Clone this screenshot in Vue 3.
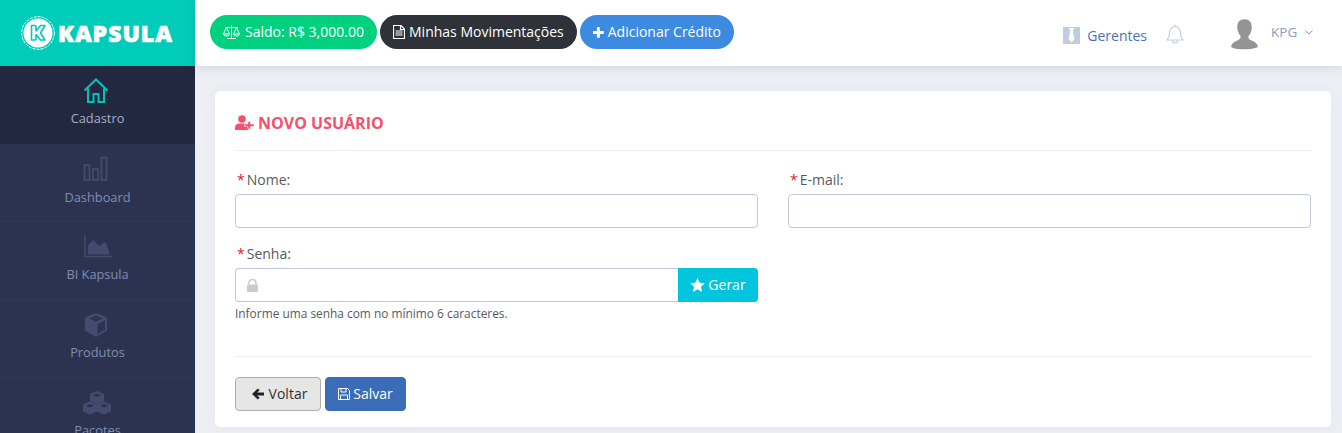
<script setup>
const menu = [
  { label: 'Dashboard', icon: 'bars' },
  { label: 'BI Kapsula', icon: 'area' },
  { label: 'Produtos', icon: 'box' },
  { label: 'Pacotes', icon: 'boxes' }
]
</script>

<template>
  <div class="page">
    <aside class="side">
      <div class="logo">
        <svg class="logo-mark" width="34" height="34" viewBox="0 0 34 34">
          <circle cx="17" cy="17" r="16.300" fill="none" stroke="#fff" stroke-width="1" stroke-dasharray="3 1" />
          <circle cx="17" cy="17" r="14.500" fill="#fff" />
          <path d="M10.500 9.500h3.500a1 1 0 0 1 1 1v4.500l4.500-5.500h4.500l-4.500 7.500 4.500 7h-4.500l-4.500-5.500v4.500a1 1 0 0 1-1 1h-3.500z" fill="none" stroke="#00ccbb" stroke-width="1.600" stroke-linejoin="round" />
        </svg>
        <span class="logo-text">KAPSULA</span>
      </div>
      <a class="item active">
        <svg width="26" height="26" viewBox="0 0 26 26" fill="none" stroke="#00c4b8" stroke-width="2">
          <path d="M1.500 12.500 13 1.500l11.500 11M5 10.500V24h5.500v-8h5v8H21V10.500" />
        </svg>
        <span>Cadastro</span>
      </a>
      <a v-for="m in menu" :key="m.label" class="item" :class="'is-' + m.icon">
        <svg v-if="m.icon === 'bars'" width="26" height="26" viewBox="0 0 26 26" fill="none" stroke="#434b70" stroke-width="1.800">
          <rect x="1.500" y="9" width="5" height="15" /><rect x="10" y="13" width="5" height="11" /><rect x="18.500" y="1.500" width="5" height="22.500" />
        </svg>
        <svg v-else-if="m.icon === 'area'" width="28" height="26" viewBox="0 0 28 26">
          <path d="M1 1v21.500h27" fill="none" stroke="#434b70" stroke-width="1.400" />
          <path d="M4 20.500v-9l5-5.500 6 6 5.500-3.500 2 1 3 11z" fill="#434b70" />
        </svg>
        <svg v-else-if="m.icon === 'box'" width="24" height="26" viewBox="0 0 24 26">
          <path d="M12 1 23 5.500v13L12 25 1 18.500v-13z" fill="#434b70" />
          <path d="M12 3.500 19 6.500 12 9.500 5 6.500zM13.500 12 21 8.500v9L13.500 22z" fill="#2c3350" />
        </svg>
        <svg v-else width="30" height="26" viewBox="0 0 30 26">
          <g fill="#434b70">
            <path d="M15 1l7 3v7l-7 3-7-3V4z" /><path d="M8 11.500l7 3v7l-7 3-7-3v-7z" /><path d="M22 11.500l7 3v7l-7 3-7-3v-7z" />
          </g>
          <g fill="#2c3350">
            <path d="M15 3.500l4 1.700-4 1.700-4-1.700zM8 14l4 1.700-4 1.700-4-1.700zM22 14l4 1.700-4 1.700-4-1.700z" />
          </g>
        </svg>
        <span>{{ m.label }}</span>
      </a>
    </aside>

    <div class="main">
      <header class="top">
        <div class="pills">
          <a class="pill green">
            <svg width="17" height="14" viewBox="0 0 17 14" fill="none" stroke="#fff" stroke-width="1">
              <path d="M8.500 0.500V13M4 13.500h9M2 2.500h13M3.500 2.500l-3 6.500h6zM13.500 2.500l-3 6.500h6zM0.500 9.500c.5 1 1.500 1.500 3 1.500s2.500-.5 3-1.500M10.500 9.500c.5 1 1.500 1.500 3 1.500s2.500-.5 3-1.500" />
            </svg>
            <span>Saldo: R$ 3,000.00</span>
          </a>
          <a class="pill dark">
            <svg width="12" height="14" viewBox="0 0 12 14">
              <path d="M0.500 0.500h7.500l3.500 3.500v9.500H0.500z" fill="none" stroke="#fff" stroke-width="1.200" />
              <path d="M2.500 6h7M2.500 8h7M2.500 10h7M7.500 1v3.500H11" fill="none" stroke="#fff" stroke-width="1.200" />
            </svg>
            <span>Minhas Movimentações</span>
          </a>
          <a class="pill blue">
            <svg width="11" height="11" viewBox="0 0 11 11"><path d="M4 0h3v4h4v3H7v4H4V7H0V4h4z" fill="#fff" /></svg>
            <span>Adicionar Crédito</span>
          </a>
        </div>
        <div class="tools">
          <a class="tool-link">
            <svg width="17" height="17" viewBox="0 0 17 17">
              <rect width="17" height="17" fill="#bfcde0" />
              <path d="M6 1h5L9.800 4.500 11.500 12 8.500 15.500 5.500 12 7.200 4.500z" fill="#fff" />
            </svg>
            Gerentes
          </a>
          <svg class="bell" width="18" height="20" viewBox="0 0 18 20" fill="none" stroke="#c5cee2" stroke-width="1.200">
            <path d="M1 16c2-2 2.500-3.500 2.500-7 0-3.500 2.300-6.500 5.500-6.500s5.500 3 5.500 6.500c0 3.500.5 5 2.500 7zM9 .5v2M6.500 16.500c0 1.500 1 2.500 2.500 2.500s2.500-1 2.500-2.500" />
          </svg>
          <div class="user">
            <svg width="27" height="33" viewBox="0 0 30 34">
              <path d="M15 0c5.500 0 8 3.500 8 8.500 0 2-.2 3.500-.7 5.200-.7 2.400-1.800 4-3 5.300 0 2.500 1 3.700 3.500 4.800 3.500 1.500 6 2.500 7.200 7.200C26.500 32.800 20.500 33.500 15 33.500S3.500 32.800 0 30.800c1.200-4.700 3.700-5.700 7.200-7.200 2.500-1.100 3.500-2.300 3.500-4.800-1.200-1.300-2.300-2.900-3-5.300C7.200 12 7 10.500 7 8.500 7 3.500 9.500 0 15 0z" fill="#949494" />
            </svg>
            <span class="user-name">KPG</span>
            <svg class="chev" width="8" height="5" viewBox="0 0 8 5" fill="none" stroke="#8b9dbd" stroke-width="1"><path d="M.5.500 4 4 7.500.500" /></svg>
          </div>
        </div>
      </header>

      <main class="content">
        <section class="card">
          <h1 class="title">
            <svg width="19" height="15" viewBox="0 0 19 15">
              <circle cx="7" cy="4" r="3.800" fill="#f4516c" />
              <path d="M0 15v-2.500C0 10 2 8.500 4.500 8.500h5c2 0 3.500 1 4 2.500v4z" fill="#f4516c" />
              <path d="M13 6.500h2.500v2.500H19v2.500h-3.500V14H13v-2.500H9.500V9H13z" fill="#f4516c" stroke="#fff" stroke-width=".5" />
            </svg>
            NOVO USUÁRIO
          </h1>
          <form class="form">
            <div class="grid">
              <div class="field">
                <label><i>*</i><b>Nome:</b></label>
                <input type="text" />
              </div>
              <div class="field">
                <label><i>*</i><b>E-mail:</b></label>
                <input type="text" />
              </div>
              <div class="field">
                <label><i>*</i><b>Senha:</b></label>
                <div class="group">
                  <span class="lock">
                    <svg width="11" height="13" viewBox="0 0 11 13">
                      <path d="M2 5.500V3.800C2 1.800 3.500.5 5.500.5S9 1.800 9 3.800v1.700" fill="none" stroke="#cbcbcb" stroke-width="1.600" />
                      <rect y="5.500" width="11" height="7.500" rx="1" fill="#cbcbcb" />
                    </svg>
                  </span>
                  <input type="password" />
                  <button type="button" class="gen">
                    <svg width="15" height="14" viewBox="0 0 15 14"><path d="M7.500 0l2.200 4.700 5.100.6-3.800 3.500 1 5.100-4.500-2.600L3 13.900l1-5.100L.2 5.300l5.100-.6z" fill="#fff" /></svg>
                    <span>Gerar</span>
                  </button>
                </div>
                <small>Informe uma senha com no mínimo 6 caracteres.</small>
              </div>
            </div>
          </form>
          <div class="actions">
            <button type="button" class="btn back">
              <svg width="12" height="12" viewBox="0 0 13 12"><path d="M6.300 0l2 2L5.500 4.300H13v3.400H5.500L8.300 10l-2 2L0 6z" fill="#222" /></svg>
              <span>Voltar</span>
            </button>
            <button type="button" class="btn save">
              <svg width="12" height="12" viewBox="0 0 12 12" fill="none" stroke="#fff" stroke-width="1">
                <path d="M.5.500h9l2 2v9H.5zM3 .5v3.500h5V.5M2.500 11.500V7h7v4.500" />
              </svg>
              <span>Salvar</span>
            </button>
          </div>
        </section>
      </main>
    </div>
  </div>
</template>

<style>
html, body { margin: 0; height: 100%; overflow: hidden; }
</style>

<style scoped>
* { box-sizing: border-box; }
.page {
  display: flex;
  width: 1342px;
  height: 433px;
  overflow: hidden;
  font-family: "Open Sans", sans-serif;
  background: #eeeff5;
}
.side {
  flex: 0 0 195px;
  background: #2c3350;
  display: flex;
  flex-direction: column;
}
.logo {
  flex: 0 0 66px;
  background: #00ccb9;
  display: flex;
  align-items: center;
  justify-content: center;
  gap: 3px;
  padding-right: 1px;
}
.logo-text {
  font-weight: 800;
  font-size: 23px;
  color: #fff;
  letter-spacing: 1px;
  -webkit-text-stroke: .7px #fff;
}
.item {
  flex: 0 0 78px;
  display: flex;
  flex-direction: column;
  align-items: center;
  padding-top: 12px;
  border-bottom: 1px solid #30385a;
  color: #7f8db3;
  font-size: 12.800px;
  line-height: 18px;
}
.item svg { height: 26px; margin-bottom: 5px; margin-right: 3px; }
.item.is-bars svg { margin-bottom: 6px; }
.item.is-area svg { margin-right: 0; }
.item.is-boxes svg { margin-right: 1px; }
.item.active {
  background: #222840;
  color: #a6aec4;
  border-bottom-color: #222840;
}
.main { flex: 1; display: flex; flex-direction: column; min-width: 0; }
.top {
  flex: 0 0 66px;
  background: #fff;
  box-shadow: 0 1px 10px rgba(80, 85, 110, .18);
  display: flex;
  justify-content: space-between;
  padding-left: 15px;
  position: relative;
}
.pills { display: flex; gap: 3px; padding-top: 15px; }
.pill {
  height: 34px;
  border-radius: 17px;
  display: flex;
  align-items: center;
  gap: 4px;
  padding: 0 13px;
  color: #fff;
  font-size: 14px;
  white-space: nowrap;
}
.pill span, .gen span, .btn span { padding-bottom: 2px; }
.green { background: #00d17f; width: 167px; gap: 5px; }
.dark { background: #2f3238; width: 197px; }
.blue { background: #3d8be0; width: 154px; }
.tools { display: flex; align-items: flex-start; padding-top: 18px; color: #4a72b5; }
.tool-link {
  display: flex;
  align-items: center;
  gap: 7px;
  font-size: 14px;
  line-height: 19px;
  color: #4a72b5;
  margin-top: 8px;
  margin-left: -1px;
}
.bell { margin-left: 19px; margin-top: 6px; }
.user { display: flex; align-items: flex-start; margin-left: 47px; width: 111px; }
.user-name { font-size: 13.500px; color: #8b9dbd; margin-left: 13px; margin-top: 5px; line-height: 18px; }
.chev { margin-left: 8px; margin-top: 12px; }
.content { flex: 1; padding: 25px 11px 6px 20px; }
.card {
  background: #fff;
  border-radius: 5px;
  height: 336px;
  padding: 0 20px;
  box-shadow: 0 1px 15px rgba(69, 65, 78, .05);
}
.title {
  margin: 0;
  height: 60px;
  display: flex;
  align-items: center;
  gap: 4px;
  border-bottom: 1px solid #ebedf2;
  font-size: 16px;
  font-weight: 700;
  color: #f4516c;
  padding-top: 4px;
}
.form { height: 206px; border-bottom: 1px solid #ebedf2; padding-top: 20px; }
.grid { display: grid; grid-template-columns: 523px 523px; column-gap: 30px; row-gap: 17px; }
.field label {
  display: flex;
  gap: 2px;
  font-size: 14px;
  line-height: 18px;
  color: #575962;
  padding-left: 2px;
  margin-bottom: 5px;
}
.field label i { font-style: normal; color: #d9232d; }
.field label b { font-weight: 400; }
.field input {
  display: block;
  width: 100%;
  height: 34px;
  border: 1px solid #c3c8dc;
  border-radius: 4px;
  background: #fff;
  outline: none;
  padding: 0 10px;
}
.group { display: flex; position: relative; }
.group input {
  flex: 1;
  min-width: 0;
  border-right: 0;
  border-radius: 4px 0 0 4px;
  padding-left: 30px;
}
.lock { position: absolute; left: 12px; top: 11px; line-height: 0; }
.gen {
  flex: 0 0 80px;
  height: 34px;
  border: 0;
  border-radius: 0 4px 4px 0;
  background: #00c5dc;
  color: #fff;
  font: 14px "Open Sans", sans-serif;
  display: flex;
  align-items: center;
  justify-content: center;
  gap: 3px;
  padding: 0;
}
small {
  display: block;
  font-size: 11.900px;
  line-height: 16px;
  color: #575962;
  margin-top: 3px;
}
.actions { display: flex; gap: 4px; padding-top: 20px; }
.btn {
  height: 34px;
  border-radius: 4px;
  font: 14px "Open Sans", sans-serif;
  display: flex;
  align-items: center;
  justify-content: center;
  padding: 0;
}
.back { width: 86px; background: #e6e6e6; border: 1px solid #adadad; color: #333; gap: 5px; padding-left: 3px; }
.save { width: 81px; background: #3a6cb7; border: 1px solid #3a6cb7; color: #fff; gap: 3px; }
</style>
